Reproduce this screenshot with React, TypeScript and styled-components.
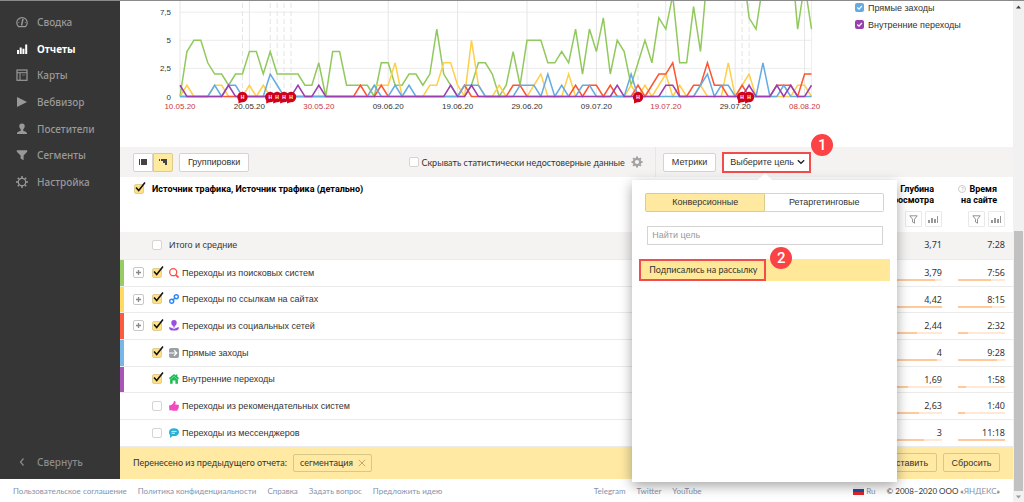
import React from "react";
import styled, { createGlobalStyle } from "styled-components";

const ui = `"Liberation Sans", Arial, sans-serif`;
const heading = `Roboto, Arial, sans-serif`;
const text = `"Noto Sans", sans-serif`;
const small = `Lato, "Noto Sans", sans-serif`;

const GlobalStyle = createGlobalStyle`
  *, *::before, *::after { box-sizing: border-box; }
  body { margin: 0; background: #fff; color: #333; font-family: ${ui}; font-size: 9px; }
  button, input { font: inherit; color: inherit; margin: 0; padding: 0; }
  a { color: inherit; text-decoration: none; }
`;

const Window = styled.div`
  display: flex;
  min-height: 100vh;
  border-top: 1px solid #8a8a8a;
`;

const Page = styled.div`
  flex: 1;
  min-width: 0;
  display: flex;
  flex-direction: column;
`;

const Body = styled.div`
  flex: 1;
  display: flex;
`;

/* ---------- side menu ---------- */

const Sidebar = styled.nav`
  width: 120px;
  flex: none;
  display: flex;
  flex-direction: column;
  padding: 7px 0 4px;
  background: #363636;
  font-family: ${text};
  font-size: 10px;
  font-weight: 500;
`;

const MenuLink = styled.a<{ $active?: boolean }>`
  height: 27px;
  display: flex;
  align-items: center;
  gap: 9px;
  padding-left: 16px;
  color: ${(p) => (p.$active ? "#fff" : "#999")};
  font-weight: ${(p) => (p.$active ? 700 : 500)};

  &:nth-child(3n) { height: 26px; }
  svg { flex: none; }
`;

const Collapse = styled.button`
  margin-top: auto;
  height: 26px;
  display: flex;
  align-items: center;
  gap: 9px;
  padding-left: 16px;
  border: 0;
  background: none;
  color: #8c8c8c;
`;

/* ---------- chart ---------- */

const Main = styled.main`
  flex: 1;
  min-width: 0;
  display: flex;
  flex-direction: column;
`;

const ChartArea = styled.section`
  display: flex;
  height: 146px;
  overflow: hidden;

  svg { flex: none; }
`;

const Legend = styled.div`
  display: flex;
  flex-direction: column;
  gap: 6px;
  margin-left: 15px;
  padding-top: 1px;
`;

const LegendItem = styled.label`
  height: 11px;
  display: flex;
  align-items: center;
  gap: 4px;
`;

const LegendBox = styled.span<{ $color: string }>`
  position: relative;
  width: 9px;
  height: 9px;
  display: flex;
  border-radius: 2px;
  background: ${(p) => p.$color};

  input { position: absolute; inset: 0; width: 9px; height: 9px; opacity: 0; }
`;

/* ---------- toolbar ---------- */

const Toolbar = styled.div`
  display: flex;
  height: 30px;
  background: #f4f3f2;
`;

const ToolsLeft = styled.div`
  width: 60%;
  display: flex;
  align-items: center;
  gap: 6px;
  padding: 0 12px 0 13px;
  border-right: 1px solid #e8e7e6;
`;

const ToolsRight = styled.div`
  display: flex;
  align-items: center;
  gap: 6px;
  padding-left: 7px;
`;

const Button = styled.button`
  height: 19px;
  padding: 0 8px;
  border: 1px solid #d5d4d3;
  border-radius: 2px;
  background: #fff;
  white-space: nowrap;
`;

const Toggle = styled.div`
  display: flex;
  height: 19px;
`;

const ToggleButton = styled.button<{ $on?: boolean }>`
  width: 20px;
  display: flex;
  align-items: center;
  justify-content: center;
  border: 1px solid ${(p) => (p.$on ? "#dccb8a" : "#d5d4d3")};
  border-radius: ${(p) => (p.$on ? "0 2px 2px 0" : "2px 0 0 2px")};
  background: ${(p) => (p.$on ? "#ffeba0" : "#fff")};
`;

const HideLabel = styled.label`
  display: flex;
  align-items: center;
  gap: 2px;
  margin-left: auto;
  font-family: ${small};
  white-space: nowrap;
`;

const IconButton = styled.button`
  display: flex;
  border: 0;
  background: none;
`;

/* ---------- tick boxes ---------- */

const TickBox = styled.span`
  position: relative;
  flex: none;
  width: 10px;
  height: 10px;
  display: flex;

  input {
    appearance: none;
    width: 10px;
    height: 10px;
    border: 1px solid #d5d4d3;
    border-radius: 2px;
    background: #fff;
  }
  input:checked { background: #ffe082; border-color: #e0cf94; }
  svg { position: absolute; left: 0; top: -2px; pointer-events: none; }
`;

/* ---------- goal menu ---------- */

const GoalPicker = styled.div`
  position: relative;
`;

const GoalButton = styled.button`
  height: 21px;
  display: flex;
  align-items: center;
  gap: 3px;
  padding: 0 4px 0 6px;
  border: 2px solid #f24c4c;
  background: #fff;
  white-space: nowrap;
`;

const StepBadge = styled.span`
  position: absolute;
  z-index: 3;
  width: 22px;
  height: 22px;
  border-radius: 50%;
  background: #fb4245;
  color: #fff;
  font: 500 15px/22px Roboto, sans-serif;
  text-align: center;
`;

const FirstBadge = styled(StepBadge)`
  top: -18px;
  left: 89px;
`;

const SecondBadge = styled(StepBadge)`
  top: -12px;
  left: 131px;
`;

const Popup = styled.div`
  position: absolute;
  z-index: 2;
  top: 28px;
  left: -90px;
  width: 265px;
  height: 302px;
  padding: 13px 7px;
  background: #fff;
  box-shadow: 0 4px 12px rgba(0, 0, 0, 0.35);

  &::before {
    content: "";
    position: absolute;
    top: -5px;
    left: 128px;
    width: 10px;
    height: 10px;
    background: #fff;
    transform: rotate(45deg);
  }
`;

const Tabs = styled.div`
  display: flex;
  margin: 0 6px 14px;
`;

const Tab = styled.button<{ $on?: boolean }>`
  flex: 1;
  height: 19px;
  border: 1px solid ${(p) => (p.$on ? "#dccb8a" : "#d5d4d3")};
  border-radius: ${(p) => (p.$on ? "2px 0 0 2px" : "0 2px 2px 0")};
  border-left-width: ${(p) => (p.$on ? "1px" : "0")};
  background: ${(p) => (p.$on ? "#ffe9a0" : "#fff")};
`;

const Search = styled.input`
  display: block;
  width: 236px;
  height: 19px;
  margin: 0 8px 14px;
  padding: 0 4px;
  border: 1px solid #d5d4d3;
  background: #fff;

  &::placeholder { color: #999; opacity: 1; }
`;

const GoalRow = styled.div`
  position: relative;
  height: 22px;
  display: flex;
  background: #ffe999;
`;

const Goal = styled.button`
  width: 127px;
  padding: 0 8px;
  border: 2px solid #f24c4c;
  background: none;
  font-family: ${small};
  text-align: left;
  white-space: nowrap;
`;

/* ---------- report table ---------- */

const Report = styled.table`
  width: 100%;
  border-collapse: collapse;
  table-layout: fixed;

  th, td { padding: 0; }
`;

const HeadRow = styled.tr`
  height: 55px;
  color: #000;
  font-family: ${heading};
`;

const SourceHead = styled.th`
  text-align: left;
  vertical-align: top;
`;

const SourceLabel = styled.label`
  display: flex;
  align-items: center;
  gap: 8px;
  height: 12px;
  margin: 6px 0 0 14px;
  white-space: nowrap;
`;

const MetricHead = styled.th`
  && { padding: 7px 8px 0; }
  text-align: right;
  vertical-align: top;
  line-height: 11px;
  white-space: nowrap;
`;

const MetricName = styled.div`
  display: flex;
  justify-content: flex-end;
  padding-right: 8px;
`;

const NameText = styled.span`
  flex: none;
`;

const HelpAnchor = styled.span`
  position: relative;
`;

const Help = styled.span`
  position: absolute;
  left: -11px;
  top: 1px;
  width: 8px;
  height: 8px;
  border: 1px solid #ccc;
  border-radius: 50%;
  color: #bbb;
  font-size: 6px;
  font-weight: 400;
  line-height: 6px;
  text-align: center;
`;

const MetricTools = styled.div`
  display: flex;
  justify-content: flex-end;
  gap: 3px;
  margin-top: 5px;
`;

const SmallButton = styled.button`
  width: 17px;
  height: 16px;
  display: flex;
  align-items: center;
  justify-content: center;
  border: 1px solid #e9e9e9;
  border-radius: 1px;
  background: #fff;
`;

const Row = styled.tr<{ $total?: boolean }>`
  height: 27px;
  background: ${(p) => (p.$total ? "#f4f3f2" : "#fff")};
  border-bottom: 1px solid #ebebeb;

  &:nth-child(3n) { height: 26px; }
`;

const SourceCell = styled.td<{ $stripe?: string }>`
  box-shadow: inset 4px 0 ${(p) => p.$stripe || "transparent"};
`;

const Source = styled.div`
  display: flex;
  align-items: center;
  padding-left: 13px;
  white-space: nowrap;
`;

const Expand = styled.button<{ $hidden?: boolean }>`
  width: 11px;
  height: 11px;
  display: flex;
  align-items: center;
  justify-content: center;
  margin-right: 8px;
  border: 1px solid #c8c8c8;
  border-radius: 2px;
  background: #fff;
  visibility: ${(p) => (p.$hidden ? "hidden" : "visible")};
`;

const SourceName = styled.label`
  display: flex;
  align-items: center;
  gap: 7px;
`;

const NameWithIcon = styled.span`
  display: flex;
  align-items: center;
  gap: 3px;
`;

const Value = styled.td`
  && { padding: 0 8px; }
  font-family: ${text};
  text-align: right;
`;

const Amount = styled.div<{ $plain?: boolean }>`
  height: 12px;
  margin-top: ${(p) => (p.$plain ? "0" : "3px")};
  line-height: 12px;
`;

const Track = styled.div`
  height: 2px;
  background: #ffe8d6;
`;

const Fill = styled.div`
  height: 2px;
  background: #ffc999;
`;

/* ---------- bottom bar ---------- */

const CarryBar = styled.div`
  flex: 1;
  min-height: 32px;
  display: flex;
  align-items: center;
  gap: 6px;
  padding: 0 13px;
  background: #ffe9a3;
  font-family: ${small};
`;

const Chip = styled.button`
  height: 18px;
  display: flex;
  align-items: center;
  gap: 5px;
  padding: 0 5px 0 6px;
  border: 1px solid #d9c787;
  border-radius: 2px;
  background: none;
`;

const BarButton = styled.button<{ $first?: boolean }>`
  height: 19px;
  width: 57px;
  margin-left: ${(p) => (p.$first ? "auto" : "0")};
  border: 1px solid #d9c787;
  border-radius: 2px;
  background: none;
  font-family: ${ui};
`;

/* ---------- footer ---------- */

const Footer = styled.footer`
  height: 24px;
  display: flex;
  align-items: center;
  justify-content: space-between;
  padding: 1px 13px 0;
  color: #8591ad;
  font-family: ${small};
  font-size: 8px;
  white-space: nowrap;
`;

const FooterGroup = styled.div`
  display: flex;
  align-items: center;
  gap: 11px;
`;

const Language = styled.a`
  display: flex;
  align-items: center;
  gap: 2px;
`;

const Copyright = styled.span`
  color: #333;
  a { color: #8591ad; }
`;

/* ---------- scroll bar ---------- */

const ScrollBar = styled.div`
  width: 11px;
  flex: none;
  display: flex;
  flex-direction: column;
  align-items: center;
  padding: 4px 0;
  background: #f1f1f1;
`;

const Thumb = styled.div`
  width: 9px;
  height: 260px;
  margin: auto 0 4px;
  background: #c1c1c1;
`;

/* ---------- data ---------- */

const STEP = 6.94;
const X0 = 60;
const Y0 = 95.5;
const UNIT = 11.24;

const green = [0,4,5,5,3,2,2,1,2,2,4,4,2,4,2,2,2,2,1,1,3,0,4,4,1,1,1,1,0,3,3,1,1,2,2,1,2,6,2,1,0,0,1,3,3,2,0,1,4,1,5,5,5,3,3,4,3,6,2,6,4,7,2,5,4,1,3,5,3,7,6,9,3,3,8,4,11,14,14,14,14,12,7,6,10,14,14,14,13,6,10,6];

const sparse = (points: Record<number, number>) =>
  Array.from({ length: 92 }, (_, i) => points[i] ?? 0);

const yellow = sparse({ 1:1,5:1,6:1,10:1,12:1,28:1,29:1,30:1,31:3,36:1,37:1,38:3,39:3,40:1,42:5,43:1,46:1,51:1,52:2,56:2,65:1,67:1,69:1,70:2,72:1,75:1,79:3,81:1,82:2,89:1,90:1 });
const red = sparse({ 26:1,29:1,41:1,48:1,49:1,57:1,59:1,60:1,62:1,66:1,68:1,69:2,70:2,71:3,74:1,75:1,76:3,77:1,78:1,81:1,86:1,87:1,88:1,90:2,91:2 });
const blue = sparse({ 5:1,7:1,8:1,13:2,14:1,28:1,31:1,33:1,41:1,42:1,43:1,49:1,50:1,51:1,53:2,55:1,58:1,59:1,65:2,75:1,76:2,78:1,79:1,84:3,87:1 });
const purple = sparse({ 0:1,7:1,17:1,20:1,39:1,42:1,63:1,70:1,71:1,82:1,86:1,88:1,91:1 });

const series: [string, number[]][] = [
  ["#91c95c", green],
  ["#ffcf4a", yellow],
  ["#fd5431", red],
  ["#65abe3", blue],
  ["#9a3fae", purple],
];

const dates: [string, boolean][] = [
  ["10.05.20", true], ["20.05.20", false], ["30.05.20", true], ["09.06.20", false], ["19.06.20", false],
  ["29.06.20", false], ["09.07.20", false], ["19.07.20", true], ["29.07.20", false], ["08.08.20", true],
];

const notes = [9, 13, 14, 15, 16, 66, 81, 82];

const px = (i: number) => X0 + i * STEP;
const py = (v: number) => Y0 - v * UNIT;

const TrafficChart = () => (
  <svg width="720" height="120" viewBox="0 0 720 120" fontFamily={ui} fontSize="8">
    {[0, 2.5, 5, 7.5].map((v) => (
      <g key={v}>
        <line x1={X0} x2={px(91)} y1={py(v)} y2={py(v)} stroke="#ececec" />
        <text x="51" y={py(v) + 3} textAnchor="end" fill="#333">{String(v).replace(".", ",")}</text>
      </g>
    ))}
    {dates.map(([d, weekend], i) => (
      <g key={d}>
        <line x1={px(i * 10)} x2={px(i * 10)} y1="0" y2={Y0} stroke="#e6e6e6" />
        <text x={px(i * 10)} y="108" textAnchor="middle" fill={weekend ? "#c8393c" : "#333"}>{d}</text>
      </g>
    ))}
    <line x1={px(91)} x2={px(91)} y1="0" y2={Y0} stroke="#eee" />
    {notes.map((n) => (
      <line key={n} x1={px(n)} x2={px(n)} y1="2" y2={Y0} stroke="#e4e4e4" strokeDasharray="5 3" />
    ))}
    {series.map(([color, data]) => (
      <polyline
        key={color}
        points={data.map((v, i) => `${px(i)},${py(v)}`).join(" ")}
        fill="none"
        stroke={color}
        strokeWidth="1.5"
      />
    ))}
    {notes.map((n) => (
      <g key={n} transform={`translate(${px(n)} ${Y0 + 0.5})`}>
        <path d="M-4 2.500 L-4 6.500 L1 4.500 Z" fill="#d0021b" />
        <circle r="5.200" fill="#d0021b" />
        <text y="2" fontSize="5" fontWeight="700" textAnchor="middle" fill="#fff">Н</text>
      </g>
    ))}
  </svg>
);

/* ---------- icons ---------- */

const GaugeIcon = () => (
  <svg width="12" height="12" viewBox="0 0 12 12" fill="none" stroke="#999" strokeWidth="1.2">
    <path d="M2.600 10.700 A5.200 5.200 0 1 1 9.400 10.700 Z" strokeLinejoin="round" />
    <path d="M7 2.800 L5.500 9.500" strokeWidth="1.500" />
    <path d="M2.300 6.500h1M8.800 6.500h1M3.600 3.500l.6.6" strokeWidth=".8" />
  </svg>
);
const BarsIcon = () => (
  <svg width="12" height="12" viewBox="0 0 12 12" fill="#fff">
    <rect x="1" y="7" width="2" height="4" /><rect x="3.700" y="4.500" width="2" height="6.500" />
    <rect x="6.400" y="5.700" width="2" height="5.300" /><rect x="9.200" y="1.500" width="2" height="9.500" />
  </svg>
);
const MapIcon = () => (
  <svg width="12" height="12" viewBox="0 0 12 12" fill="none" stroke="#999">
    <rect x="1" y="1" width="10" height="10.300" strokeWidth="1.200" /><path d="M1 3.700h10M4 3.700v7.500" />
    <path d="M6 6h3" strokeWidth=".6" />
  </svg>
);
const PlayIcon = () => (
  <svg width="12" height="12" viewBox="0 0 12 12"><path d="M1 1 L11 6 L1 11 Z" fill="#999" /></svg>
);
const PersonIcon = () => (
  <svg width="12" height="12" viewBox="0 0 12 12" fill="#999">
    <path d="M6 .5c1.900 0 2.900 1.300 2.700 3.100-.1 1.200-.7 2.200-1.500 2.800v1c0 .8 3.800.9 3.800 3.100v.6H1v-.6c0-2.200 3.800-2.300 3.800-3.100v-1C4 5.800 3.400 4.800 3.300 3.600 3.100 1.800 4.100.5 6 .5Z" />
  </svg>
);
const FunnelIcon = () => (
  <svg width="12" height="12" viewBox="0 0 12 12"><path d="M.8 1.200h10.400v1.500L7.600 6.500v4.700L4.600 9.500v-3L.8 2.700Z" fill="#999" /></svg>
);
const SettingsIcon = () => (
  <svg width="12" height="12" viewBox="0 0 12 12" fill="none" stroke="#999">
    <circle cx="6" cy="6" r="3.700" strokeWidth="1.200" />
    <path d="M6 0v2M6 10v2M0 6h2M10 6h2M1.800 1.800l1.400 1.400M8.800 8.800l1.400 1.400M10.200 1.800 8.800 3.200M3.200 8.800l-1.400 1.400" strokeWidth="1.500" />
  </svg>
);
const GearIcon = () => (
  <svg width="12" height="12" viewBox="0 0 12 12" fill="none" stroke="#a3a3a3">
    <circle cx="6" cy="6" r="3.200" strokeWidth="2.200" />
    <path d="M6 .5v2M6 9.500v2M.5 6h2M9.500 6h2M2.100 2.100l1.300 1.300M8.600 8.600l1.300 1.300M9.900 2.100 8.600 3.400M3.400 8.600 2.100 9.900" strokeWidth="2" />
  </svg>
);

const menu: [string, React.ReactNode][] = [
  ["Сводка", <GaugeIcon />], ["Отчеты", <BarsIcon />], ["Карты", <MapIcon />], ["Вебвизор", <PlayIcon />],
  ["Посетители", <PersonIcon />], ["Сегменты", <FunnelIcon />], ["Настройка", <SettingsIcon />],
];

const SearchIcon = () => (
  <svg width="10" height="10" viewBox="0 0 10 10" fill="none" stroke="#f5504a">
    <circle cx="4.200" cy="4.200" r="3.500" strokeWidth="1.300" /><path d="M6.800 6.800 9.500 9.500" strokeWidth="1.800" />
  </svg>
);
const ChainIcon = () => (
  <svg width="10" height="10" viewBox="0 0 10 10" fill="none" stroke="#2f86f0" strokeWidth="1.400">
    <circle cx="2.700" cy="7.300" r="2" /><circle cx="7.300" cy="2.700" r="2" /><path d="M3.600 6.400 6.400 3.600" />
  </svg>
);
const SocialIcon = () => (
  <svg width="10" height="11" viewBox="0 0 10 11" fill="#9b4fe0">
    <path d="M5 0c1.900 0 2.800 1.200 2.700 2.900C7.600 4.600 6.600 6 5 6S2.400 4.600 2.300 2.900C2.200 1.200 3.100 0 5 0Z" />
    <path d="M4.300 5.500h1.400v2H4.300zM0 7.200c1.300 0 2.200.1 3 .8 1.200 1 2.800 1 4 0 .8-.7 1.700-.8 3-.8-.2 2.300-1.500 3.300-3 3.300H3C1.500 10.500.2 9.500 0 7.200Z" />
  </svg>
);
const DirectIcon = () => (
  <svg width="10" height="10" viewBox="0 0 10 10">
    <rect width="10" height="10" rx="2" fill="#9a9fa3" />
    <path d="M0 5h7.500M5 2.200 7.800 5 5 7.800" fill="none" stroke="#fff" strokeWidth="1.200" />
  </svg>
);
const HomeIcon = () => (
  <svg width="10" height="10" viewBox="0 0 10 10" fill="#1fbb55">
    <path d="M5 0 6.800 1.400V.5h1.600v2.200L10 4l-.9 1.500L5 2.200.9 5.500 0 4Z" />
    <path d="M5 2.400 8.900 5.600v4.100H6.400V6.500H3.600v3.200H1.100V5.600Z" />
  </svg>
);
const ThumbIcon = () => (
  <svg width="10" height="10" viewBox="0 0 10 10" fill="#f04cc0">
    <path d="M0 4.500 2.300 4 4.300 2.200 5 0c1.500-.2 1.900 1.100 1.500 2.300L6.100 3.600 9.200 3.700c1 .2.900 1.400.4 1.700.5.500.3 1.500-.3 1.700.2.800-.1 1.400-.7 1.500.1.700-.4 1.200-1.100 1.200H4L2.300 9.200.4 9.600Z" />
  </svg>
);
const ChatIcon = () => (
  <svg width="10" height="10" viewBox="0 0 10 10">
    <path d="M5 .3c3 0 5 1.500 5 3.900S8 8.100 5 8.100c-.5 0-1 0-1.500-.1L1 9.900V7C.3 6.300 0 5.200 0 4.200 0 1.800 2 .3 5 .3Z" fill="#28b1d6" />
    <path d="M2.500 3.400h5M2.500 5.200h3.500" stroke="#fff" strokeWidth=".8" />
  </svg>
);
const TinyFunnel = () => (
  <svg width="9" height="9" viewBox="0 0 9 9" fill="none" stroke="#888" strokeWidth=".9">
    <path d="M.8.8h7.400L5.500 4.200v4L3.500 7V4.200Z" />
  </svg>
);
const TinyBars = () => (
  <svg width="11" height="9" viewBox="0 0 11 9" fill="#999">
    <rect x="0" y="5" width="2" height="3" /><rect x="3" y="3" width="2" height="5" />
    <rect x="6" y="4" width="2" height="4" /><rect x="9" y="1" width="1" height="7" />
  </svg>
);

const Tick = ({ id, on }: { id: string; on?: boolean }) => (
  <TickBox>
    <input type="checkbox" id={id} defaultChecked={on} />
    {on && (
      <svg width="12" height="11" viewBox="0 0 12 11" fill="none" stroke="#111" strokeWidth="1.500">
        <path d="M2 5.500 4.700 8.500 11 .5" />
      </svg>
    )}
  </TickBox>
);

const rows = [
  { name: "Переходы из поисковых систем", icon: <SearchIcon />, stripe: "#97cc64", plus: true, on: true, depth: "3,79", d: 85, time: "7:56", t: 70 },
  { name: "Переходы по ссылкам на сайтах", icon: <ChainIcon />, stripe: "#ffd963", plus: true, on: true, depth: "4,42", d: 100, time: "8:15", t: 73 },
  { name: "Переходы из социальных сетей", icon: <SocialIcon />, stripe: "#fd5a3e", plus: true, on: true, depth: "2,44", d: 47, time: "2:32", t: 22 },
  { name: "Прямые заходы", icon: <DirectIcon />, stripe: "#77b6e7", on: true, depth: "4", d: 89, time: "9:28", t: 84 },
  { name: "Внутренние переходы", icon: <HomeIcon />, stripe: "#a955b8", on: true, depth: "1,69", d: 28, time: "1:58", t: 17 },
  { name: "Переходы из рекомендательных систем", icon: <ThumbIcon />, depth: "2,63", d: 52, time: "1:40", t: 15 },
  { name: "Переходы из мессенджеров", icon: <ChatIcon />, depth: "3", d: 62, time: "11:18", t: 100 },
];

const ColumnTools = () => (
  <MetricTools>
    <SmallButton aria-label="Фильтр"><TinyFunnel /></SmallButton>
    <SmallButton aria-label="График"><TinyBars /></SmallButton>
  </MetricTools>
);

const Meter = ({ value, share }: { value: string; share: number }) => (
  <Value>
    <Amount>{value}</Amount>
    <Track><Fill style={{ width: `${share}%` }} /></Track>
  </Value>
);

export default function App() {
  return (
    <>
      <GlobalStyle />
      <Window>
        <Page>
          <Body>
            <Sidebar>
              {menu.map(([label, icon]) => (
                <MenuLink key={label} href="#" $active={label === "Отчеты"}>{icon}{label}</MenuLink>
              ))}
              <Collapse>
                <svg width="12" height="10" viewBox="0 0 12 10" fill="none" stroke="#8c8c8c" strokeWidth="1.200">
                  <path d="M7.500 1.500 4.500 5l3 3.500" />
                </svg>
                Свернуть
              </Collapse>
            </Sidebar>
            <Main>
              <ChartArea>
                <TrafficChart />
                <Legend>
                  {[["Прямые заходы", "#65abe3"], ["Внутренние переходы", "#9a3fae"]].map(([label, color]) => (
                    <LegendItem key={label}>
                      <LegendBox $color={color}>
                        <input type="checkbox" defaultChecked />
                        <svg width="9" height="9" viewBox="0 0 9 9" fill="none" stroke="#fff" strokeWidth="1.200">
                          <path d="M2.300 4.500 4 6.200 6.900 3" />
                        </svg>
                      </LegendBox>
                      {label}
                    </LegendItem>
                  ))}
                </Legend>
              </ChartArea>

              <Toolbar>
                <ToolsLeft>
                  <Toggle>
                    <ToggleButton aria-label="Список">
                      <svg width="8" height="6" viewBox="0 0 8 6" fill="#444"><path d="M0 0h1v6H0zM2 0h6v6H2z" /></svg>
                    </ToggleButton>
                    <ToggleButton $on aria-label="Дерево">
                      <svg width="8" height="6" viewBox="0 0 8 6" fill="#444"><path d="M0 0h1v2H0zM2 0h6v6H6V4H4V2H2z" /></svg>
                    </ToggleButton>
                  </Toggle>
                  <Button>Группировки</Button>
                  <HideLabel htmlFor="hide">
                    <Tick id="hide" />
                    Скрывать статистически недостоверные данные
                  </HideLabel>
                  <IconButton aria-label="Параметры"><GearIcon /></IconButton>
                </ToolsLeft>
                <ToolsRight>
                  <Button>Метрики</Button>
                  <GoalPicker>
                    <GoalButton>
                      Выберите цель
                      <svg width="8" height="6" viewBox="0 0 8 6" fill="none" stroke="#222" strokeWidth="1.300">
                        <path d="M.8 1.200 4 4.300 7.200 1.200" />
                      </svg>
                    </GoalButton>
                    <FirstBadge>1</FirstBadge>
                    <Popup>
                      <Tabs>
                        <Tab $on>Конверсионные</Tab>
                        <Tab>Ретаргетинговые</Tab>
                      </Tabs>
                      <Search type="text" placeholder="Найти цель" aria-label="Найти цель" />
                      <GoalRow>
                        <Goal>Подписались на рассылку</Goal>
                        <SecondBadge>2</SecondBadge>
                      </GoalRow>
                    </Popup>
                  </GoalPicker>
                </ToolsRight>
              </Toolbar>

              <Report>
                <colgroup>
                  <col style={{ width: "60%" }} />
                  <col />
                  <col style={{ width: "63px" }} />
                  <col style={{ width: "63px" }} />
                </colgroup>
                <thead>
                  <HeadRow>
                    <SourceHead>
                      <SourceLabel htmlFor="all"><Tick id="all" on />Источник трафика, Источник трафика (детально)</SourceLabel>
                    </SourceHead>
                    <th />
                    <MetricHead>
                      <MetricName><NameText>Глубина<br />просмотра</NameText></MetricName>
                      <ColumnTools />
                    </MetricHead>
                    <MetricHead>
                      <MetricName>
                        <NameText><HelpAnchor><Help>?</Help>Время</HelpAnchor><br />на сайте</NameText>
                      </MetricName>
                      <ColumnTools />
                    </MetricHead>
                  </HeadRow>
                </thead>
                <tbody>
                  <Row $total>
                    <SourceCell>
                      <Source>
                        <Expand $hidden />
                        <SourceName htmlFor="total"><Tick id="total" />Итого и средние</SourceName>
                      </Source>
                    </SourceCell>
                    <td />
                    <Value><Amount $plain>3,71</Amount></Value>
                    <Value><Amount $plain>7:28</Amount></Value>
                  </Row>
                  {rows.map((r, i) => (
                    <Row key={r.name}>
                      <SourceCell $stripe={r.stripe}>
                        <Source>
                          <Expand $hidden={!r.plus} aria-label="Развернуть">
                            <svg width="7" height="7" viewBox="0 0 7 7" stroke="#888" strokeWidth="1.300"><path d="M3.500 1v5M1 3.500h5" /></svg>
                          </Expand>
                          <SourceName htmlFor={`row${i}`}>
                            <Tick id={`row${i}`} on={r.on} />
                            <NameWithIcon>{r.icon}{r.name}</NameWithIcon>
                          </SourceName>
                        </Source>
                      </SourceCell>
                      <td />
                      <Meter value={r.depth} share={r.d} />
                      <Meter value={r.time} share={r.t} />
                    </Row>
                  ))}
                </tbody>
              </Report>

              <CarryBar>
                Перенесено из предыдущего отчета:
                <Chip>
                  сегментация
                  <svg width="8" height="8" viewBox="0 0 8 8" stroke="#b5a468" strokeWidth=".9"><path d="M.8.8l6.400 6.400M7.200.8.8 7.200" /></svg>
                </Chip>
                <BarButton $first>Оставить</BarButton>
                <BarButton>Сбросить</BarButton>
              </CarryBar>
            </Main>
          </Body>

          <Footer>
            <FooterGroup>
              <a href="#">Пользовательское соглашение</a>
              <a href="#">Политика конфиденциальности</a>
              <a href="#">Справка</a>
              <a href="#">Задать вопрос</a>
              <a href="#">Предложить идею</a>
            </FooterGroup>
            <FooterGroup>
              <a href="#">Telegram</a>
              <a href="#">Twitter</a>
              <a href="#">YouTube</a>
            </FooterGroup>
            <FooterGroup>
              <Language href="#">
                <svg width="11" height="8" viewBox="0 0 11 8">
                  <rect width="11" height="3" fill="#f5f5f5" /><rect y="2" width="11" height="3" fill="#1a51a5" /><rect y="5" width="11" height="3" fill="#e0262d" />
                </svg>
                Ru
              </Language>
              <Copyright>© 2008–2020 ООО «<a href="#">ЯНДЕКС</a>»</Copyright>
            </FooterGroup>
          </Footer>
        </Page>
        <ScrollBar>
          <svg width="5" height="4" viewBox="0 0 5 4"><path d="M0 3.500 2.500.5 5 3.500Z" fill="#444" /></svg>
          <Thumb />
          <svg width="5" height="4" viewBox="0 0 5 4"><path d="M0 .5 2.500 3.500 5 .5Z" fill="#999" /></svg>
        </ScrollBar>
      </Window>
    </>
  );
}
